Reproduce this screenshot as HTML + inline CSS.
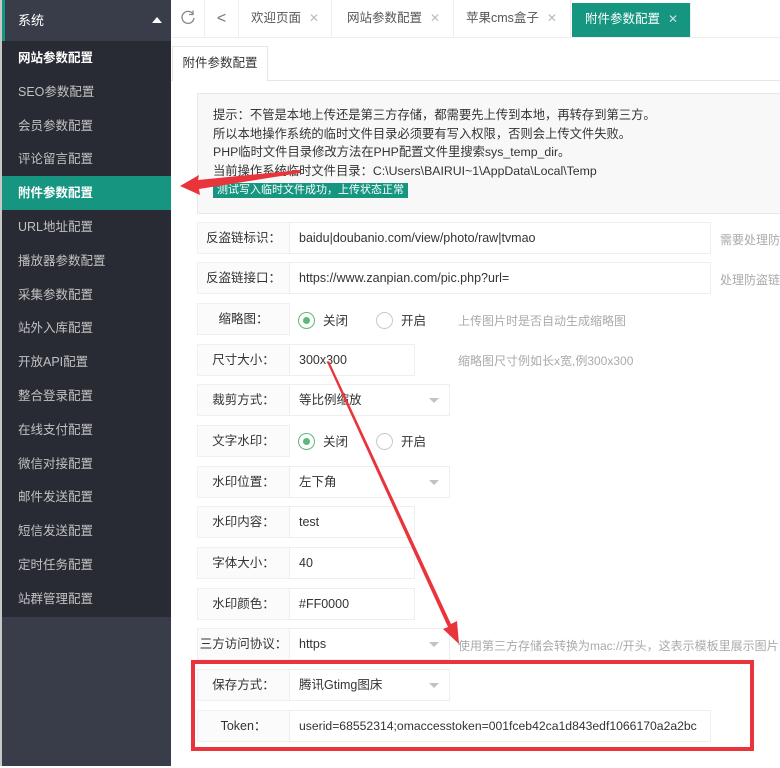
<!DOCTYPE html>
<html><head><meta charset="utf-8">
<style>
*{margin:0;padding:0;box-sizing:border-box}
body{width:780px;height:768px;overflow:hidden;background:#fff;font-family:"Liberation Sans","Noto Sans CJK SC",sans-serif;font-size:13px;color:#333;position:relative}
.a{position:absolute}
#side{left:0;top:0;width:171px;height:766px;background:#393d49;border-left:2px solid #c8c8c8}
#sub{left:2px;top:41px;width:169px;height:576px;background:#282b33}
.mi{position:absolute;left:18px;color:#c2c2c2;font-size:12.5px;line-height:34px;height:34px}
.act{left:2px;width:169px;background:#169580;color:#fff;padding-left:16px;font-weight:bold}
.tab{position:absolute;top:0;height:37px;line-height:37px;font-size:12.5px;color:#555;border-right:1px solid #eee}
.x{color:#bbb;margin-left:8px;font-size:12px}
.lab{position:absolute;left:197px;width:93px;height:32px;background:#fbfbfb;border:1px solid #f0f0f0;text-align:center;line-height:30px;font-size:12.5px;color:#333}
.inp{position:absolute;left:289px;height:32px;border:1px solid #eee;line-height:30px;padding-left:9px;font-size:12.5px;color:#333;background:#fff;white-space:nowrap;overflow:hidden}
.sel::after{content:"";position:absolute;right:10px;top:13px;border:5px solid transparent;border-top:5px solid #c2c2c2}
.hint{position:absolute;color:#aaa;font-size:12px;white-space:nowrap}
.rad{position:absolute;font-size:12.5px;line-height:16px}
.rad i{display:inline-block;width:17px;height:17px;border:1px solid #c9c9c9;border-radius:50%;vertical-align:-4px;margin-right:8px;position:relative}
.rad i.on{border-color:#5FB878}
.rad i.on::after{content:"";position:absolute;left:4px;top:4px;width:7px;height:7px;border-radius:50%;background:#5FB878}
</style></head><body>
<div id="side" class="a"></div>
<div class="a" style="left:2px;top:0;width:169px;height:41px;background:#393d49;border-left:3px solid #169580"></div>
<div class="a" style="left:18px;top:0;line-height:41px;color:#fff;font-size:13px">系统</div>
<div class="a" style="left:152px;top:17px;border:5px solid transparent;border-bottom:6px solid #fff;border-top:0"></div>
<div id="sub" class="a"></div>
<div class="mi" style="top:41px;color:#fff;font-weight:bold">网站参数配置</div>
<div class="mi" style="top:75px">SEO参数配置</div>
<div class="mi" style="top:109px">会员参数配置</div>
<div class="mi" style="top:142px">评论留言配置</div>
<div class="mi act" style="top:176px">附件参数配置</div>
<div class="mi" style="top:210px">URL地址配置</div>
<div class="mi" style="top:244px">播放器参数配置</div>
<div class="mi" style="top:278px">采集参数配置</div>
<div class="mi" style="top:311px">站外入库配置</div>
<div class="mi" style="top:345px">开放API配置</div>
<div class="mi" style="top:379px">整合登录配置</div>
<div class="mi" style="top:413px">在线支付配置</div>
<div class="mi" style="top:447px">微信对接配置</div>
<div class="mi" style="top:480px">邮件发送配置</div>
<div class="mi" style="top:514px">短信发送配置</div>
<div class="mi" style="top:548px">定时任务配置</div>
<div class="mi" style="top:582px">站群管理配置</div>

<div class="a" style="left:171px;top:37px;width:609px;height:1px;background:#eee"></div>
<div class="tab" style="left:171px;width:34px;text-align:center"><svg width="16" height="16" viewBox="0 0 16 16" style="vertical-align:-3px"><path d="M13 5A6 6 0 1 0 14 9" fill="none" stroke="#888" stroke-width="1.3"/><path d="M13 1.5V5.5H9" fill="none" stroke="#888" stroke-width="1.3"/></svg></div>
<div class="tab" style="left:205px;width:34px;text-align:center;color:#777;font-size:16px">&lt;</div>
<div class="tab" style="left:239px;padding:0 12px">欢迎页面<span class="x">✕</span></div>
<div class="tab" style="left:334px;padding:0 13px">网站参数配置<span class="x">✕</span></div>
<div class="tab" style="left:453px;padding:0 13px">苹果cms盒子<span class="x">✕</span></div>
<div class="tab" style="left:572px;width:119px;padding-left:13px;background:#169580;color:#fff;top:3px;height:34px;line-height:32px">附件参数配置<span class="x" style="color:#cde">✕</span></div>

<div class="a" style="left:171px;top:80px;width:609px;height:1px;background:#e6e6e6"></div>
<div class="a" style="left:172px;top:46px;width:96px;height:35px;background:#fff;border:1px solid #e6e6e6;border-bottom:0;line-height:33px;text-align:center;font-size:12.5px">附件参数配置</div>

<div class="a" style="left:197px;top:93px;width:590px;height:121px;background:#f8f8f8;border:1px solid #e8e8e8"></div>
<div class="a" style="left:213px;top:106px;font-size:12.3px;line-height:18.5px;color:#333;white-space:nowrap">提示：不管是本地上传还是第三方存储，都需要先上传到本地，再转存到第三方。<br>所以本地操作系统的临时文件目录必须要有写入权限，否则会上传文件失败。<br>PHP临时文件目录修改方法在PHP配置文件里搜索sys_temp_dir。<br>当前操作系统临时文件目录：C:\Users\BAIRUI~1\AppData\Local\Temp</div>
<div class="a" style="left:213px;top:183px;height:15px;line-height:15px;padding:0 4px;background:#169580;color:#fff;font-size:11px">测试写入临时文件成功，上传状态正常</div>

<div class="lab" style="top:222px">反盗链标识：</div><div class="inp" style="top:222px;width:422px">baidu|doubanio.com/view/photo/raw|tvmao</div><div class="hint" style="left:720px;top:231px">需要处理防</div>
<div class="lab" style="top:262px">反盗链接口：</div><div class="inp" style="top:262px;width:422px">https://www.zanpian.com/pic.php?url=</div><div class="hint" style="left:720px;top:271px">处理防盗链</div>
<div class="lab" style="top:303px">缩略图：</div><div class="rad" style="left:298px;top:312px"><i class="on"></i>关闭</div><div class="rad" style="left:376px;top:312px"><i></i>开启</div><div class="hint" style="left:458px;top:312px">上传图片时是否自动生成缩略图</div>
<div class="lab" style="top:344px">尺寸大小：</div><div class="inp" style="top:344px;width:126px">300x300</div><div class="hint" style="left:458px;top:352px">缩略图尺寸例如长x宽,例300x300</div>
<div class="lab" style="top:384px">裁剪方式：</div><div class="inp sel" style="top:384px;width:161px">等比例缩放</div>
<div class="lab" style="top:425px">文字水印：</div><div class="rad" style="left:298px;top:433px"><i class="on"></i>关闭</div><div class="rad" style="left:376px;top:433px"><i></i>开启</div>
<div class="lab" style="top:466px">水印位置：</div><div class="inp sel" style="top:466px;width:161px">左下角</div>
<div class="lab" style="top:506px">水印内容：</div><div class="inp" style="top:506px;width:126px">test</div>
<div class="lab" style="top:547px">字体大小：</div><div class="inp" style="top:547px;width:126px">40</div>
<div class="lab" style="top:588px">水印颜色：</div><div class="inp" style="top:588px;width:126px">#FF0000</div>
<div class="lab" style="top:628px">三方访问协议：</div><div class="inp sel" style="top:628px;width:161px">https</div><div class="hint" style="left:458px;top:637px">使用第三方存储会转换为mac://开头，这表示模板里展示图片</div>
<div class="lab" style="top:669px">保存方式：</div><div class="inp sel" style="top:669px;width:161px">腾讯Gtimg图床</div>
<div class="lab" style="top:710px">Token：</div><div class="inp" style="top:710px;width:422px;font-size:12.2px">userid=68552314;omaccesstoken=001fceb42ca1d843edf1066170a2a2bc</div>

<div class="a" style="left:191px;top:660px;width:563px;height:91px;border:4px solid #e8343a"></div>
<svg class="a" style="left:0;top:0" width="780" height="768">
<polygon points="300,170 198,180 199,175 180,186 200,195 199,189 300,173" fill="#e8343a"/>
<polygon points="327,362 329,361 451,624 457,621 459,644 443,629 448,627" fill="#e8343a"/>
</svg>
</body></html>
